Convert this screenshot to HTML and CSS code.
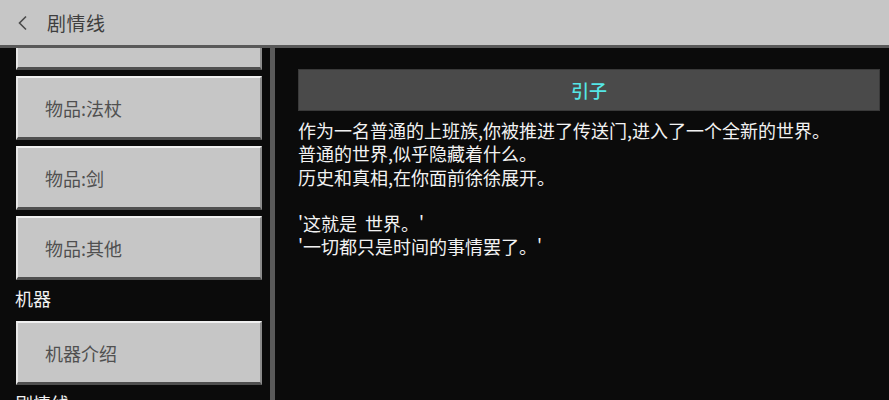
FILE: index.html
```html
<!DOCTYPE html>
<html lang="zh">
<head>
<meta charset="utf-8">
<title>剧情线</title>
<link rel="stylesheet" href="styles.css">
</head>
<body>
<div class="app">
  <header class="header">
    <span class="back">
      <svg width="12" height="16" viewBox="0 0 12 16"><polyline points="9,1.5 2.5,8 9,14.5" fill="none" stroke="#4a4a4a" stroke-width="1.6"/></svg>
    </span>
    <span class="title">剧情线</span>
  </header>
  <div class="main">
    <aside class="sidebar">
      <div class="list">
        <div class="btn"></div>
        <div class="btn"><span>物品:法杖</span></div>
        <div class="btn"><span>物品:剑</span></div>
        <div class="btn"><span>物品:其他</span></div>
        <div class="label">机器</div>
        <div class="btn"><span>机器介绍</span></div>
        <div class="label">剧情线</div>
      </div>
    </aside>
    <div class="scrollbar"></div>
    <section class="content">
      <div class="panel">引子</div>
      <div class="story">
        <p>作为一名普通的上班族,你被推进了传送门,进入了一个全新的世界。</p>
        <p>普通的世界,似乎隐藏着什么。</p>
        <p>历史和真相,在你面前徐徐展开。</p>
        <p class="blank">&nbsp;</p>
        <p>'这就是&nbsp;&nbsp;世界。'</p>
        <p>'一切都只是时间的事情罢了。'</p>
      </div>
    </section>
  </div>
</div>
</body>
</html>
```

FILE: styles.css
```css
* { box-sizing: border-box; }
html, body {
  margin: 0;
  padding: 0;
  background: #0b0b0b;
}
body {
  width: 889px;
  height: 400px;
  overflow: hidden;
  font-family: "Noto Sans CJK SC", "Noto Sans", "DejaVu Sans", sans-serif;
}
.app {
  width: 889px;
  height: 400px;
  display: flex;
  flex-direction: column;
}
.header {
  height: 48px;
  flex: none;
  background: #c6c6c6;
  border-bottom: 3px solid #595959;
  display: flex;
  align-items: center;
  padding-left: 17px;
  position: relative;
  z-index: 1;
}
.back {
  display: flex;
  align-items: center;
  width: 30px;
  height: 20px;
}
.title {
  font-size: 19px;
  color: #3e3e3e;
  line-height: 20px;
  letter-spacing: 0.5px;
}
.main {
  flex: 1;
  display: flex;
  min-height: 0;
  overflow: hidden;
}
.sidebar {
  width: 270px;
  flex: none;
  overflow: hidden;
  background: #0b0b0b;
}
.list {
  margin-top: -42px;
  padding-left: 16px;
  padding-right: 8px;
}
.btn {
  height: 64px;
  margin-bottom: 6px;
  background: #c6c6c6;
  border-top: 2px solid #f0f0f0;
  border-left: 2px solid #e6e6e6;
  border-right: 2px solid #8c8c8c;
  border-bottom: 3px solid #4f4f4f;
  display: flex;
  align-items: center;
  padding-left: 27px;
  font-size: 18px;
  color: #505050;
}
.label {
  height: 35px;
  padding-top: 1px;
  line-height: 22px;
  margin-left: -1px;
  font-size: 18px;
  color: #f2f2f2;
}
.scrollbar {
  width: 5px;
  flex: none;
  background: #5a5a5a;
}
.content {
  flex: 1;
  padding: 21px 9px 0 23px;
  background: #0b0b0b;
}
.panel {
  height: 42px;
  background: #4a4a4a;
  border: 1px solid #3a3a3a;
  display: flex;
  align-items: center;
  justify-content: center;
  font-size: 18px;
  font-weight: 500;
  color: #55e6e6;
}
.story {
  margin-top: 8px;
  color: #f2f2f2;
  font-size: 18px;
}
.story p {
  margin: 0;
  line-height: 23.3px;
  white-space: nowrap;
}
```
